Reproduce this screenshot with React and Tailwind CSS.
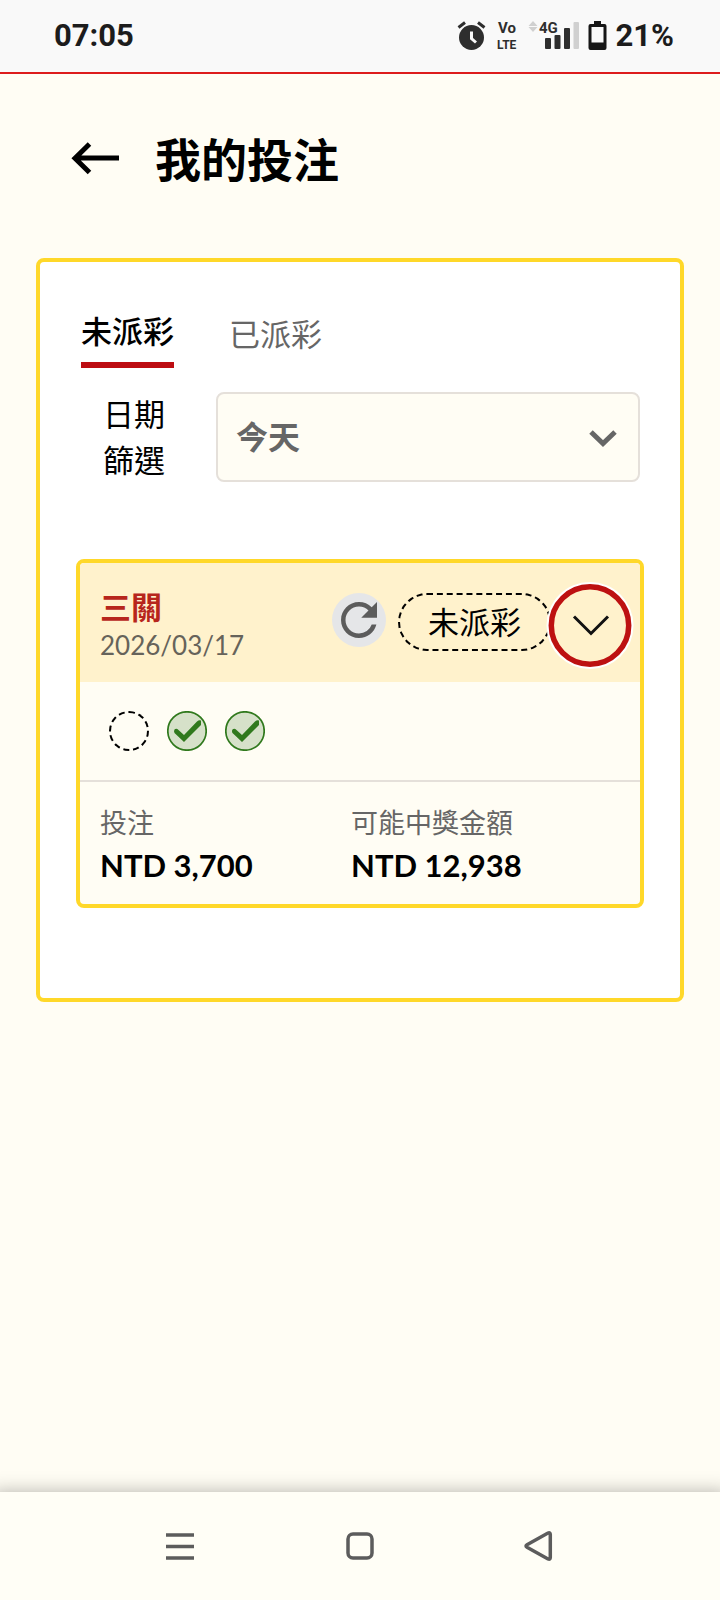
import { useState } from "react";
import { MdRefresh } from "react-icons/md";

const tabs = [
  { id: "pending", label: "未派彩" },
  { id: "settled", label: "已派彩" },
];

const bet = {
  title: "三關",
  date: "2026/03/17",
  status: "未派彩",
  legs: ["pending", "won", "won"],
  stake: "NTD 3,700",
  payout: "NTD 12,938",
};

function StatusBar() {
  return (
    <div className="flex h-[74px] items-center justify-between border-b-2 border-[#dd1c1c] bg-[#f9f9f9] pl-[54px] pr-[46px] font-['Roboto',sans-serif] text-[31px] font-bold text-[#1c1c1c]">
      <span>07:05</span>

      <div className="flex items-center">
        {/* Alarm, VoLTE, signal, battery */}
        <svg width="150" height="40" viewBox="0 -4 150 40" fill="#2e2e2e" aria-hidden="true">
          <circle cx="14.500" cy="17.500" r="12.500" />
          <path d="M1.500 7.500 8 2.500M27.500 7.500 21 2.500" stroke="#2e2e2e" strokeWidth="3" />
          <path d="M14.500 11.500v7l4.500 4" fill="none" stroke="#f9f9f9" strokeWidth="3" />

          <g fontFamily="'Roboto', sans-serif" fontWeight="700">
            <text x="41" y="13" fontSize="15">Vo</text>
            <text x="40" y="29" fontSize="12">LTE</text>
            <text x="82" y="13" fontSize="15">4G</text>
          </g>

          <path d="M76 1l4.500 5h-9zM76 12l4.500-5h-9z" fill="#d0d0d0" />
          <rect x="88" y="18" width="6" height="11" rx="1" />
          <rect x="97.500" y="15" width="6" height="14" rx="1" />
          <rect x="107" y="8" width="6" height="21" rx="1" />
          <rect x="116.500" y="2" width="5.500" height="27" rx="1" fill="#d0d0d0" />

          <path
            fill="#161616"
            fillRule="evenodd"
            d="M137 1h7v3h3.500q2 0 2 2v22q0 2-2 2h-14q-2 0-2-2V6q0-2 2-2H137zM134.500 7v15.500h12V7z"
          />
        </svg>
        <span className="ml-[9px]">21%</span>
      </div>
    </div>
  );
}

function Leg({ result }) {
  if (result === "won") {
    return (
      <svg width="40" height="40" viewBox="0 0 40 40" fill="none">
        <circle cx="20" cy="20" r="19.200" fill="#d6e1c9" stroke="#30791d" strokeWidth="1.700" />
        <path
          d="M7.500 18.500q2-1.500 4 .5l5.500 5L30 10.500q2-1.800 4-1V14L17 31 7.500 22q-1-2 0-3.500z"
          fill="#30791d"
        />
      </svg>
    );
  }

  return <span className="size-10 rounded-full border-2 border-dashed border-black" />;
}

function BetCard() {
  return (
    <div className="mt-[76px] overflow-hidden rounded-lg border-4 border-[#ffd829] bg-[#fffdf4]">
      <div className="flex items-center justify-between bg-[#fff2cc] pb-3 pl-5 pr-[6px] pt-[19px]">
        <div className="leading-[38px]">
          <h2 className="text-[31px] font-bold text-[#b7261c]">{bet.title}</h2>
          <p className="text-[26px] text-[#66635a]">{bet.date}</p>
        </div>

        <div className="flex items-center">
          <div className="flex items-start gap-3 pb-2">
            <button aria-label="重新整理" className="rounded-full bg-[#e5e6e8] text-[#5c5c5c]">
              <MdRefresh size={54} />
            </button>
            <span className="rounded-full border-2 border-dashed border-black px-7 text-[31px] leading-[54px]">
              {bet.status}
            </span>
          </div>

          <button aria-label="展開" className="relative -ml-[5px]">
            <svg width="88" height="88" viewBox="0 0 88 88" fill="none">
              <circle cx="44" cy="43.500" r="43.500" fill="#fff" />
              <circle cx="44" cy="43.500" r="38.700" fill="#fff2cc" stroke="#bd1111" strokeWidth="5.500" />
              <path d="M28 34.500l17 17 17-17" stroke="#111" strokeWidth="3" />
            </svg>
          </button>
        </div>
      </div>

      <div className="flex gap-[18px] p-[29px]">
        {bet.legs.map((result, i) => (
          <Leg key={i} result={result} />
        ))}
      </div>

      <dl className="grid grid-cols-2 border-t-2 border-[#e5e0da] pb-[18px] pl-5 pr-[38px] pt-5 leading-[42px]">
        <div>
          <dt className="text-[27px] text-[#666]">投注</dt>
          <dd className="text-[31px] font-bold">{bet.stake}</dd>
        </div>
        <div>
          <dt className="text-[27px] text-[#666]">可能中獎金額</dt>
          <dd className="text-[31px] font-bold">{bet.payout}</dd>
        </div>
      </dl>
    </div>
  );
}

function NavBar() {
  return (
    <nav className="flex h-[108px] items-center bg-[#fffef6] px-[90px] text-[#5c5c5c] shadow-[0_8px_18px_8px_rgba(0,0,0,0.3)]">
      <button aria-label="最近" className="flex flex-1 justify-center">
        <svg width="32" height="32" viewBox="0 0 32 32" fill="none" stroke="currentColor" strokeWidth="3.500">
          <path d="M2 5h28M2 16.500h28M2 28h28" />
        </svg>
      </button>
      <button aria-label="主畫面" className="flex flex-1 justify-center">
        <svg width="32" height="32" viewBox="0 0 32 32" fill="none" stroke="currentColor" strokeWidth="3.500">
          <rect x="4" y="4" width="24" height="24" rx="5" />
        </svg>
      </button>
      <button aria-label="返回" className="flex flex-1 justify-center">
        <svg width="32" height="32" viewBox="0 0 32 32" fill="none" stroke="currentColor" strokeWidth="3.500">
          <path d="M3 14.800 24 3q2.300-1 2.300 1.500v23q0 2.500-2.300 1.500L3 17.200q-2-1.200 0-2.400z" />
        </svg>
      </button>
    </nav>
  );
}

export default function App() {
  const [tab, setTab] = useState("pending");
  const [range, setRange] = useState("today");

  return (
    <div className="flex min-h-screen flex-col overflow-hidden bg-[#fffdf4] font-['Lato','Noto_Sans_CJK_TC',sans-serif] text-black">
      <StatusBar />

      <header className="flex items-center gap-[34px] px-[71px] pb-[68px] pt-[56px]">
        <button aria-label="返回">
          <svg width="50" height="36" viewBox="0 0 50 36" fill="none" stroke="#000" strokeWidth="5">
            <path d="M48 16H4M18.500 2 4 16.200 18.500 30.500" />
          </svg>
        </button>
        <h1 className="text-[46px] font-bold leading-[60px]">我的投注</h1>
      </header>

      <main className="flex-1 px-9 pb-9">
        <section className="rounded-lg border-4 border-[#ffd829] bg-white px-9 pb-[90px] pt-[46px]">
          {/* Tabs */}
          <div role="tablist" className="flex items-center gap-[55px] pl-[5px] text-[31px] leading-[46px]">
            {tabs.map((t) => (
              <button
                key={t.id}
                role="tab"
                aria-selected={tab === t.id}
                onClick={() => setTab(t.id)}
                className={
                  tab === t.id
                    ? "border-b-[6px] border-[#bd0d12] pb-2 font-medium"
                    : "pb-2 text-[#666]"
                }
              >
                {t.label}
              </button>
            ))}
          </div>

          {/* Date filter */}
          <div className="mt-[23px] flex items-center pl-[27px] pr-1 text-[31px]">
            <label htmlFor="range" className="mr-[51px] w-[62px] leading-[46px]">
              日期篩選
            </label>
            <div className="relative flex-1">
              <select
                id="range"
                value={range}
                onChange={(e) => setRange(e.target.value)}
                className="h-[90px] w-full appearance-none rounded-lg border-2 border-[#e5e0da] bg-[#fffdf4] pl-[18px] text-[32px] font-bold text-[#666]"
              >
                <option value="today">今天</option>
              </select>
              <svg
                className="pointer-events-none absolute right-5 top-1/2 -translate-y-1/2"
                width="32"
                height="20"
                viewBox="0 0 32 20"
                fill="none"
              >
                <path d="M3 5 15 16.500 27 5" stroke="#666" strokeWidth="5" />
              </svg>
            </div>
          </div>

          <BetCard />
        </section>
      </main>

      <NavBar />
    </div>
  );
}
